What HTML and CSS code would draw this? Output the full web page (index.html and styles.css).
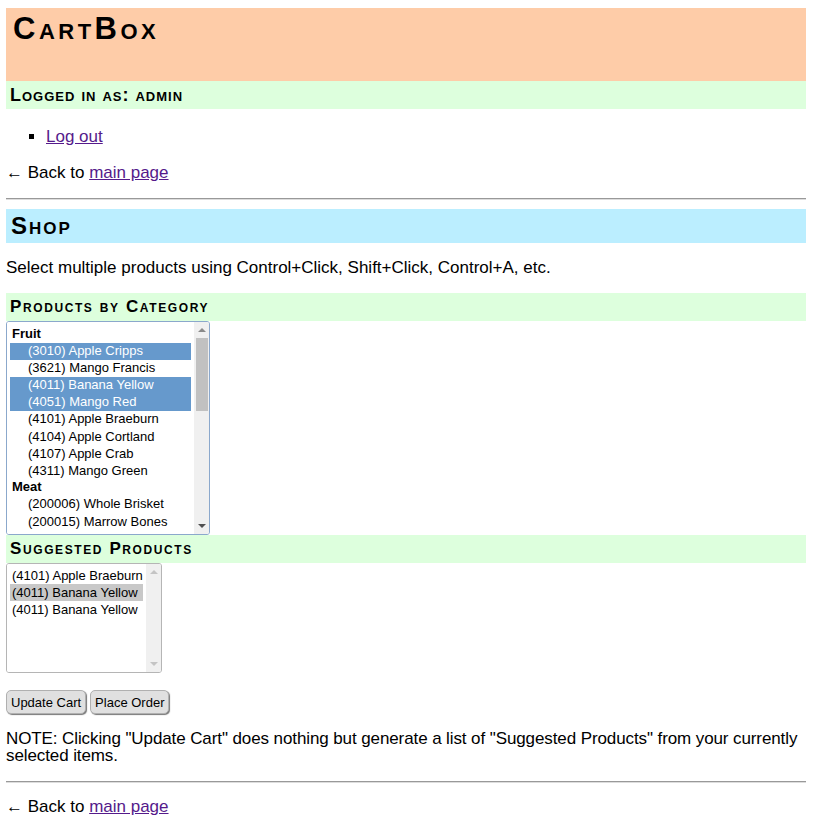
FILE: index.html
```html
<!DOCTYPE html>
<html>
<head>
<meta charset="utf-8">
<title>CartBox</title>
<link rel="stylesheet" href="styles.css">
</head>
<body>
<div class="page">
  <h1 class="title">CartBox</h1>
  <h2 class="bar green login">Logged in as: admin</h2>
  <ul class="links">
    <li><a href="#">Log out</a></li>
  </ul>
  <p class="back">← Back to <a href="#">main page</a></p>
  <hr class="rule">
  <h2 class="bar blue shop">Shop</h2>
  <p class="hint">Select multiple products using Control+Click, Shift+Click, Control+A, etc.</p>
  <h3 class="bar green sub">Products by Category</h3>
  <div class="listbox products">
    <select class="list" multiple>
      <optgroup label="Fruit">
        <option selected>(3010) Apple Cripps</option>
        <option>(3621) Mango Francis</option>
        <option selected>(4011) Banana Yellow</option>
        <option selected>(4051) Mango Red</option>
        <option>(4101) Apple Braeburn</option>
        <option>(4104) Apple Cortland</option>
        <option>(4107) Apple Crab</option>
        <option>(4311) Mango Green</option>
      </optgroup>
      <optgroup label="Meat">
        <option>(200006) Whole Brisket</option>
        <option>(200015) Marrow Bones</option>
        <option>(200028) Beef Patties</option>
        <option>(200031) Ground Beef</option>
        <option>(200044) Pork Chops</option>
        <option>(200057) Chicken Wings</option>
        <option>(200063) Lamb Shank</option>
        <option>(200078) Beef Ribs</option>
      </optgroup>
      <optgroup label="Vegetables">
        <option>(4060) Broccoli</option>
        <option>(4062) Cucumber</option>
        <option>(4064) Tomato</option>
        <option>(4068) Green Onion</option>
        <option>(4072) Potato Russet</option>
        <option>(4081) Eggplant</option>
        <option>(4087) Plum Tomato</option>
        <option>(4088) Red Pepper</option>
      </optgroup>
    </select>
    <div class="scrollbar" aria-hidden="true">
      <span class="arrow up"></span>
      <span class="track"><span class="thumb"></span></span>
      <span class="arrow down"></span>
    </div>
  </div>
  <h3 class="bar green sub">Suggested Products</h3>
  <div class="listbox suggested">
    <select class="list" multiple>
      <option>(4101) Apple Braeburn</option>
      <option class="picked">(4011) Banana Yellow</option>
      <option>(4011) Banana Yellow</option>
    </select>
    <div class="scrollbar idle" aria-hidden="true">
      <span class="arrow up"></span>
      <span class="track"></span>
      <span class="arrow down"></span>
    </div>
  </div>
  <div class="actions">
    <button class="btn">Update Cart</button>
    <button class="btn">Place Order</button>
  </div>
  <p class="note">NOTE: Clicking "Update Cart" does nothing but generate a list of "Suggested Products" from your currently selected items.</p>
  <hr class="rule end">
  <p class="back last">← Back to <a href="#">main page</a></p>
</div>
</body>
</html>
```
FILE: styles.css
```css
html, body {
  margin: 0;
  padding: 0;
  background: #fff;
}
body {
  font-family: "Liberation Sans", Arial, sans-serif;
  font-size: 17px;
  color: #000;
}
.page {
  width: 800px;
  margin: 8px 6px;
}
a { color: #551a8b; }
.title {
  margin: 0;
  background: #fecca8;
  height: 73px;
  box-sizing: border-box;
  padding: 4px 7px 0;
  font-size: 31px;
  font-variant: small-caps;
  letter-spacing: 3.5px;
  font-weight: bold;
  line-height: 34px;
}
.bar {
  margin: 0;
  font-variant: small-caps;
  font-weight: bold;
}
.green { background: #ddffdd; }
.blue { background: #bbeeff; }
.login {
  font-size: 18px;
  letter-spacing: 1px;
  height: 28px;
  line-height: 28px;
  padding: 0 4px;
}
.shop {
  font-size: 24px;
  letter-spacing: 2px;
  height: 34px;
  line-height: 34px;
  padding: 0 5px;
}
.sub {
  font-size: 17px;
  letter-spacing: 1.6px;
  height: 28px;
  line-height: 28px;
  padding: 0 4px;
}
.links {
  margin: 18px 0 0;
  padding-left: 40px;
  list-style: square;
  line-height: 19px;
}
.back {
  margin: 17px 0 0;
  line-height: 19px;
}
.back.last {
  margin-top: 14px;
}
.rule {
  margin: 16px 0 9px;
  border: 0;
  border-top: 1px solid #999;
  border-bottom: 1px solid #ddd;
  height: 0;
}
.rule.end {
  margin-top: 17px;
}
.hint {
  margin: 15px 0 16px;
  line-height: 19px;
}

/* list boxes */
.listbox {
  display: flex;
  align-items: flex-start;
  box-sizing: border-box;
  border: 1px solid #8ba8cc;
  border-radius: 3px;
  background: #fff;
  overflow: hidden;
}
.listbox.products {
  width: 204px;
  height: 214px;
}
.listbox.suggested {
  width: 156px;
  height: 110px;
  border-color: #b5b5b5;
}
.list {
  flex: 1;
  min-width: 0;
  height: 100%;
  margin: 0;
  border: 0;
  border-radius: 0;
  outline: none;
  box-sizing: border-box;
  padding: 4px 3px 0;
  font-family: "Liberation Sans", Arial, sans-serif;
  font-size: 13px;
  color: #000;
  background: #fff;
  overflow: hidden;
  scrollbar-width: none;
}
.products .list {
  height: 232px;
}
.suggested .list {
  padding-top: 3px;
}
.list option {
  padding: 0.5px 2px 1px;
  line-height: 15px;
}
.list optgroup {
  font-weight: bold;
  line-height: 15px;
}
.list optgroup option {
  font-weight: normal;
  padding-left: 18px;
}
.products option:checked {
  background: #6699cc linear-gradient(#6699cc, #6699cc);
  color: #fff;
}
.suggested option.picked {
  background: #c8c8c8;
}

/* fake classic scrollbar */
.scrollbar {
  width: 15px;
  height: 100%;
  flex: none;
  display: flex;
  flex-direction: column;
  background: #f0f0f0;
}
.arrow {
  height: 16px;
  flex: none;
  display: flex;
  align-items: center;
  justify-content: center;
}
.arrow::before {
  content: "";
  width: 0;
  height: 0;
  border-left: 4px solid transparent;
  border-right: 4px solid transparent;
}
.arrow.up::before {
  border-bottom: 4px solid #8a8a8a;
}
.arrow.down::before {
  border-top: 4px solid #505050;
}
.idle .arrow.up::before {
  border-bottom-color: #c4c4c4;
}
.idle .arrow.down::before {
  border-top-color: #c4c4c4;
}
.track {
  flex: 1;
  display: flex;
  flex-direction: column;
  padding: 0 1px 0 2px;
}
.thumb {
  height: 73px;
  background: #c1c1c1;
}

.actions {
  display: flex;
  gap: 4px;
  margin-top: 17px;
}
.btn {
  font-family: "Liberation Sans", Arial, sans-serif;
  font-size: 13px;
  height: 24px;
  padding: 0 4px;
  background: #e0e0e0;
  border: 1px solid #b0b0b0;
  border-radius: 5px;
  box-shadow: 1px 1px 1px #777;
  color: #000;
}
.note {
  margin: 16px 0 0;
  line-height: 17px;
  letter-spacing: -0.1px;
}
```
